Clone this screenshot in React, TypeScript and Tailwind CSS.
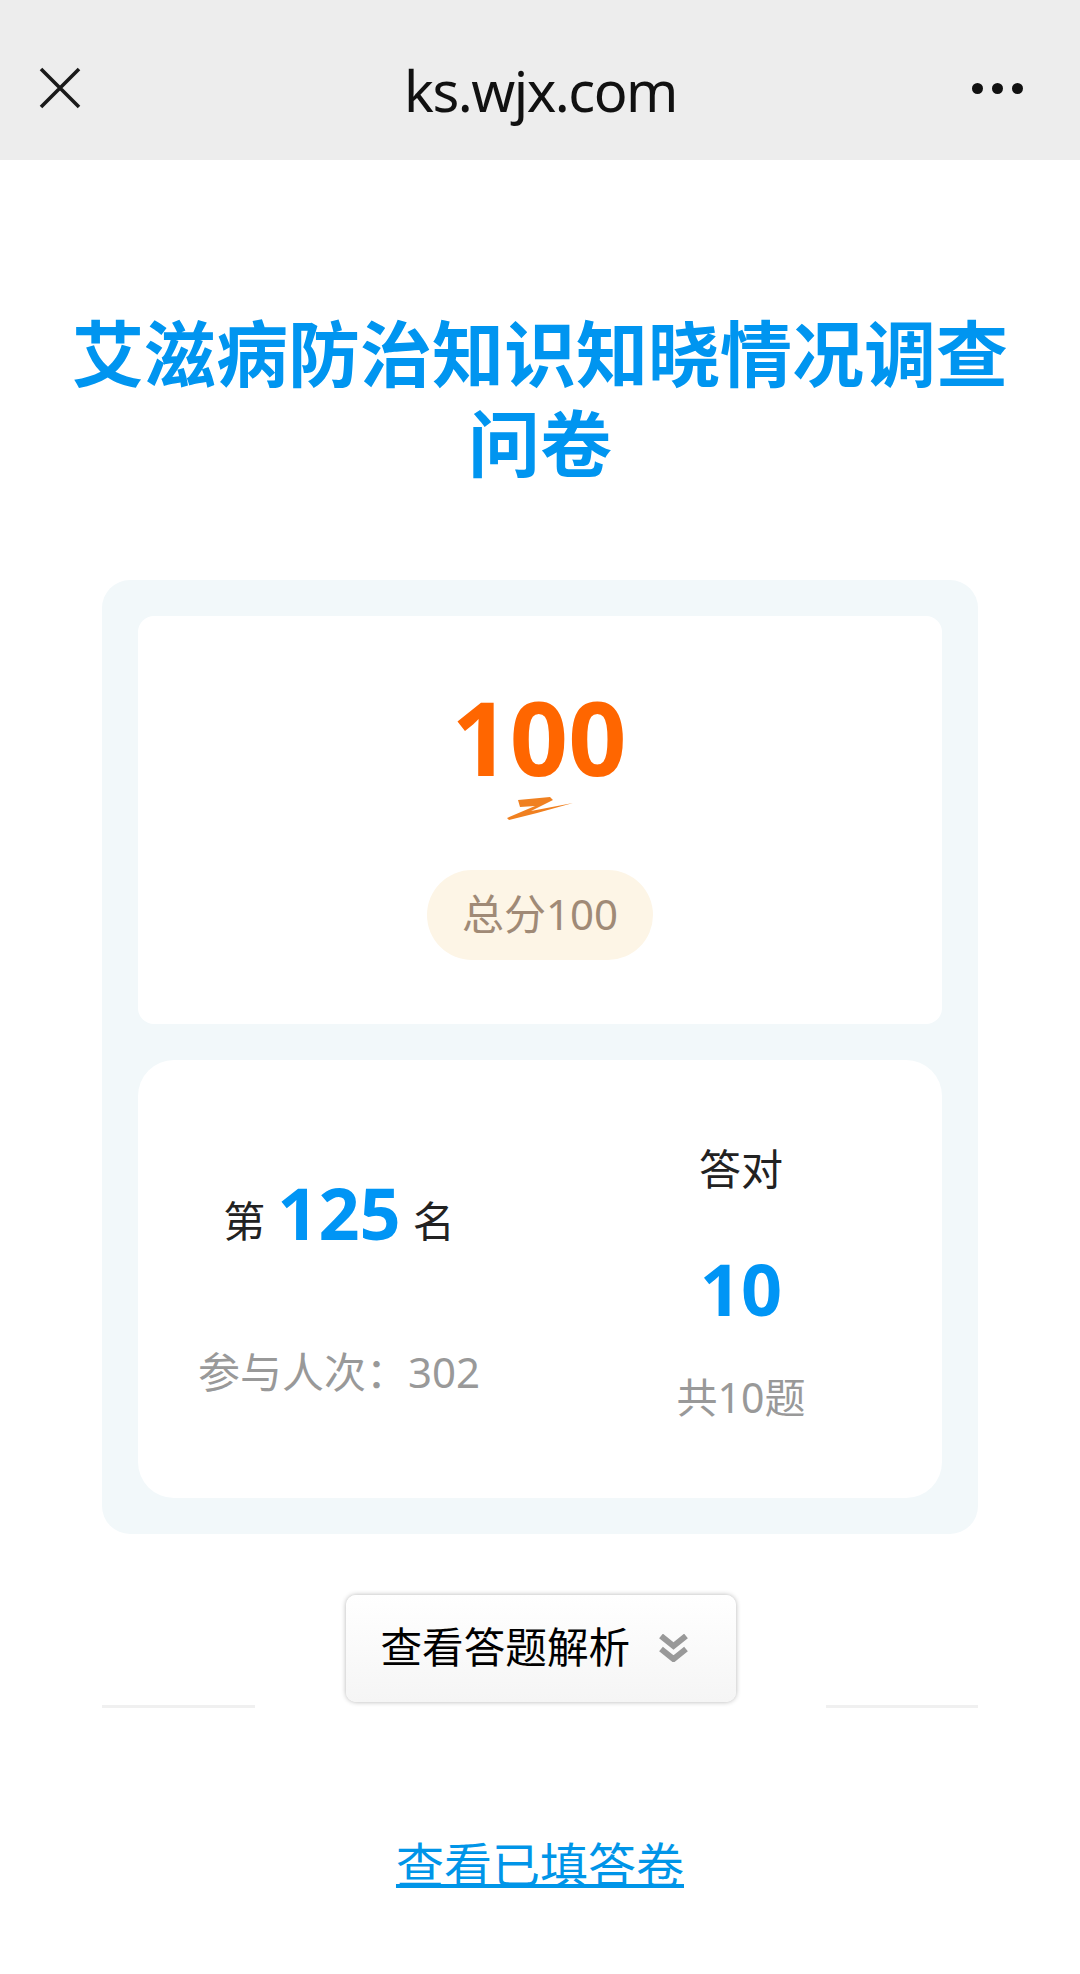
import React from "react";

const CJK = "font-['Noto_Sans','Noto_Sans_CJK_SC',sans-serif]";

function TopBar() {
  return (
    <div className="grid h-[160px] grid-cols-[1fr_auto_1fr] items-center bg-[#ededed] pl-[39px] pr-[57px]">
      <svg width="42" height="42" viewBox="0 0 42 42" className="mt-[16px]">
        <path d="M2 2 L40 40 M40 2 L2 40" stroke="#1a1a1a" strokeWidth="3.6" fill="none" />
      </svg>
      <div className="mt-[20px] ml-[19px] text-[56px] leading-[60px] text-[#111] font-['Noto_Sans',sans-serif] tracking-[-1.5px]">
        ks.wjx.com
      </div>
      {/* three dots */}
      <div className="mt-[16px] flex justify-end gap-[9px]">
        <div className="h-[11px] w-[11px] rounded-full bg-[#111]"></div>
        <div className="h-[11px] w-[11px] rounded-full bg-[#111]"></div>
        <div className="h-[11px] w-[11px] rounded-full bg-[#111]"></div>
      </div>
    </div>
  );
}

function ScoreCard() {
  return (
    <div className="flex h-[408px] flex-col items-center rounded-[16px] bg-white pt-[70px]">
      <div className="ml-[-2px] text-[102px] font-bold leading-[102px] text-[#ff6600] font-['Noto_Sans',sans-serif]">100</div>
      <svg width="66" height="24" viewBox="0 0 66 24" className="mt-[9px]">
        <path
          d="M11 3 L43 0 L46 3 L24 14 L66 6 L30 16 L2 23 L0 21 L28 9 L13 10 Z"
          fill="#f08020"
        />
      </svg>
      <div className="mt-[49px] flex h-[90px] w-[226px] items-center justify-center rounded-full bg-[#fdf5e6] pb-[4px] text-[42px] text-[#a08a76]">
        总分100
      </div>
    </div>
  );
}

function StatsCard() {
  return (
    <div className="flex h-[438px] rounded-[36px] bg-white pl-[59px]">
      <div className="flex w-[284px] flex-col items-center pt-[107px]">
        <div className="flex h-[90px] items-baseline whitespace-nowrap text-[42px] leading-[90px] text-[#222]">
          <span className="-translate-y-[3px]">第</span>
          <span className="mx-[12px] text-[72px] font-bold text-[#0095f5]">125</span>
          <span className="-translate-y-[3px]">名</span>
        </div>
        <div className="mt-[87px] whitespace-nowrap text-[42px] leading-[56px] text-[#999]">参与人次：302</div>
      </div>
      <div className="ml-[180px] flex w-[160px] flex-col items-center pt-[81px]">
        <div className="text-[42px] leading-[56px] text-[#222]">答对</div>
        <div className="mt-[46px] text-[72px] font-bold leading-[90px] text-[#0095f5]">10</div>
        <div className="mt-[36px] text-[41px] leading-[56px] text-[#999]">共10题</div>
      </div>
    </div>
  );
}

export default function App() {
  return (
    <div className={`min-h-[1974px] w-full bg-white ${CJK}`}>
      <TopBar />

      <h1 className="px-[60px] pt-[148px] text-center text-[72px] font-bold leading-[90px] text-[#0095f0]">
        艾滋病防治知识知晓情况调查问卷
      </h1>

      {/* Result panel */}
      <div className="mx-[102px] mt-[92px] flex h-[954px] flex-col gap-[36px] rounded-[28px] bg-[#f2f8fa] p-[36px]">
        <ScoreCard />
        <StatsCard />
      </div>

      {/* Answer toggle sits in a break of the divider */}
      <div className="mx-[102px] mt-[61px] flex items-end justify-between">
        <div className="h-[3px] w-[153px] bg-[#f0f0f0]"></div>
        <div className="mb-[6px] flex h-[107px] w-[390px] items-start rounded-[10px] bg-gradient-to-b from-white to-[#f5f5f5] pl-[35px] pt-[24px] shadow-[0_0_5px_rgba(0,0,0,0.3)]">
          <span className="text-[41.6px] leading-[56px] text-black">查看答题解析</span>
          <svg width="29" height="28" viewBox="0 0 29 28" className="ml-[29px] mt-[15px]">
            <path d="M2 2 L14.5 12 L27 2 M2 15 L14.5 25 L27 15" stroke="#999" strokeWidth="6" fill="none" />
          </svg>
        </div>
        <div className="h-[3px] w-[152px] bg-[#f0f0f0]"></div>
      </div>

      <div className="mt-[123px] flex justify-center">
        <a className="text-[48px] leading-[68px] text-[#0095e8] underline decoration-[4px] underline-offset-[1px]">
          查看已填答卷
        </a>
      </div>
    </div>
  );
}
